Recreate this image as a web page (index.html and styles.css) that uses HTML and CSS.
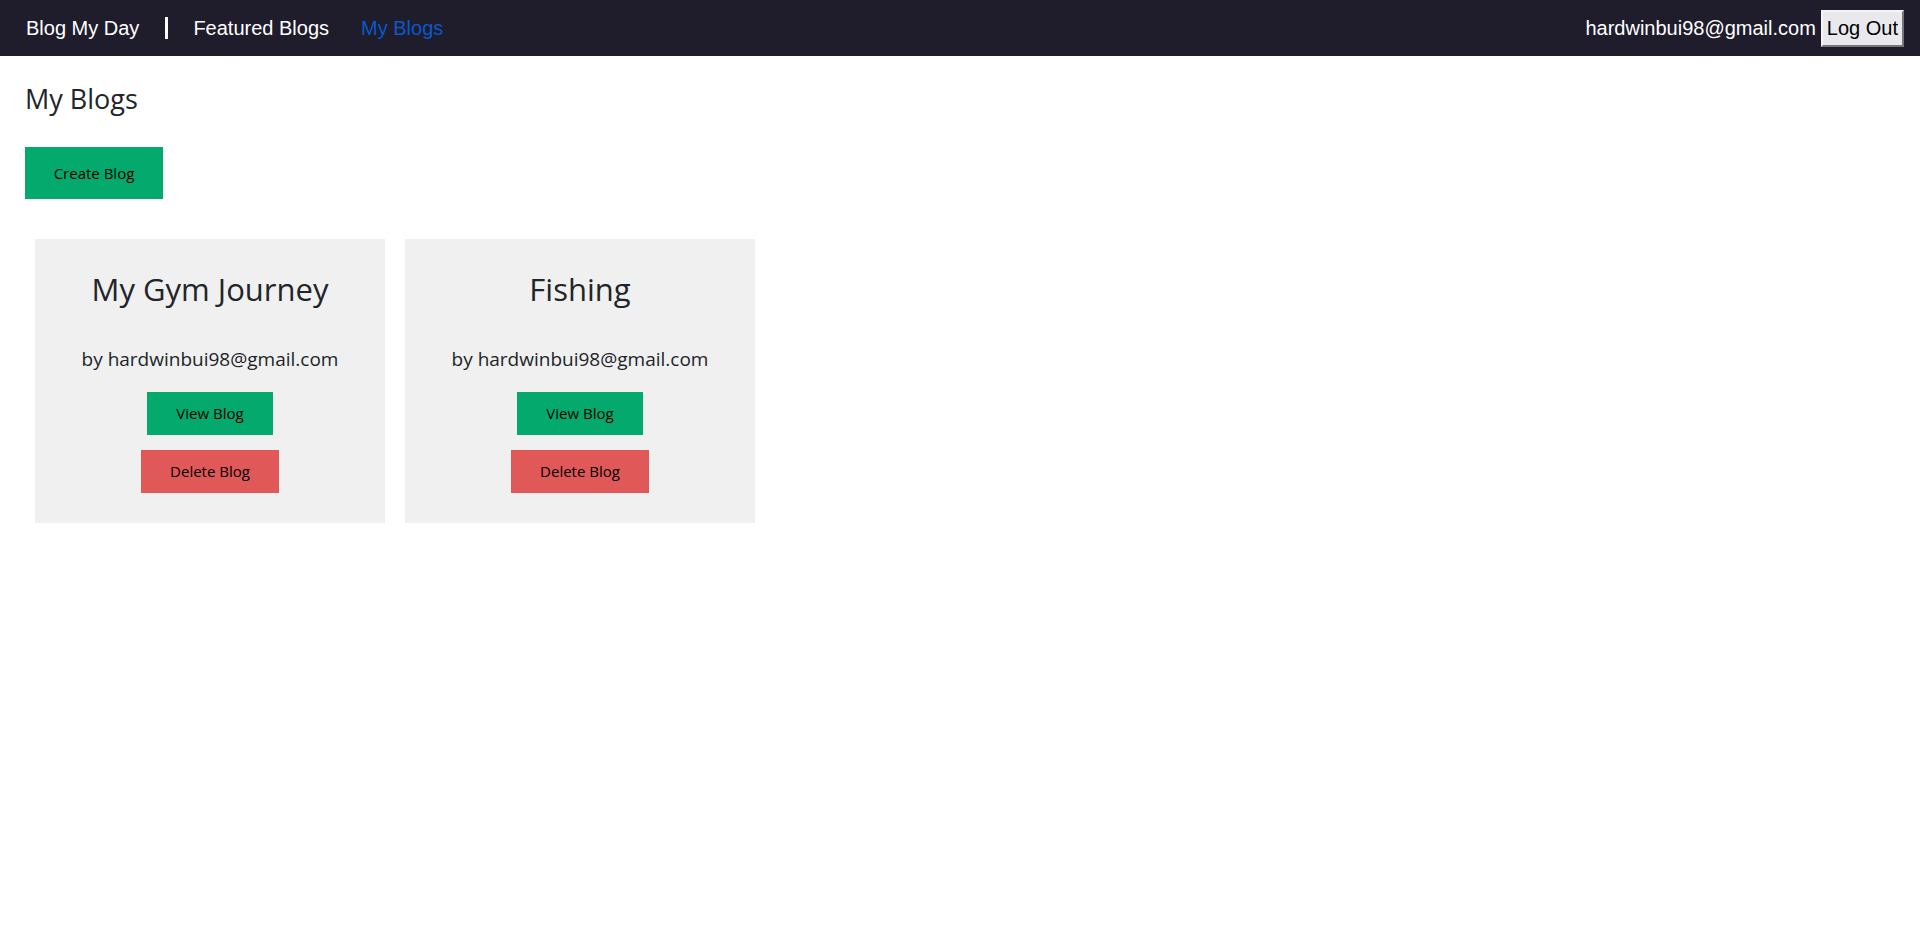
FILE: index.html
```html
<!DOCTYPE html>
<html lang="en">
<head>
<meta charset="utf-8">
<title>Blog My Day - My Blogs</title>
<link rel="stylesheet" href="styles.css">
</head>
<body>
<nav class="navbar">
  <div class="nav-left">
    <a class="brand" href="#">Blog My Day</a>
    <span class="divider"></span>
    <a class="nav-link" href="#">Featured Blogs</a>
    <a class="nav-link active" href="#">My Blogs</a>
  </div>
  <div class="nav-right">
    <span class="user-email">hardwinbui98@gmail.com</span>
    <button class="logout">Log Out</button>
  </div>
</nav>
<main class="page">
  <h3 class="page-title">My Blogs</h3>
  <button class="btn btn-green btn-create">Create Blog</button>
  <div class="cards">
    <div class="card">
      <h2 class="card-title">My Gym Journey</h2>
      <p class="card-author">by hardwinbui98@gmail.com</p>
      <button class="btn btn-green btn-view">View Blog</button>
      <button class="btn btn-red btn-delete">Delete Blog</button>
    </div>
    <div class="card">
      <h2 class="card-title">Fishing</h2>
      <p class="card-author">by hardwinbui98@gmail.com</p>
      <button class="btn btn-green btn-view">View Blog</button>
      <button class="btn btn-red btn-delete">Delete Blog</button>
    </div>
  </div>
</main>
</body>
</html>
```
FILE: styles.css
```css
* { box-sizing: border-box; }
html, body { margin: 0; padding: 0; }
body {
  font-family: "Open Sans", "Noto Sans", sans-serif;
  color: #212529;
  background: #ffffff;
  font-size: 16px;
  line-height: 1.5;
}
.navbar {
  height: 56px;
  background: #1f1c2c;
  display: flex;
  align-items: center;
  justify-content: space-between;
  padding: 0 16px 0 26px;
  font-family: "Liberation Sans", Arial, sans-serif;
  font-size: 20px;
  line-height: 23px;
}
.nav-left { display: flex; align-items: center; }
.nav-left a { color: #ffffff; text-decoration: none; }
.divider {
  display: block;
  width: 3px;
  height: 22px;
  background: #ffffff;
  margin: 0 25px 0 26px;
}
.nav-link { margin-right: 32px; }
.nav-left .nav-link.active { color: #0a58ca; }
.nav-right { display: flex; align-items: center; gap: 5px; }
.user-email { color: #ffffff; }
.logout {
  font-family: "Liberation Sans", Arial, sans-serif;
  font-size: 20px;
  height: 37px;
  padding: 0 4px;
  color: #000;
  background: #e9e9ed;
  border-width: 2px;
  border-style: solid;
  border-color: #f4f4f6 #767676 #767676 #f4f4f6;
}
.page { padding: 0 25px; }
.page-title {
  font-size: 27px;
  font-weight: 400;
  line-height: 1.2;
  margin: 27px 0 32px;
}
.btn {
  font-family: "Open Sans", "Noto Sans", sans-serif;
  font-size: 15px;
  border: none;
  color: #000;
  display: flex;
  align-items: center;
  justify-content: center;
  padding: 0;
}
.btn-green { background: #04a96d; }
.btn-red { background: #e05858; }
.btn-create { width: 138px; height: 52px; }
.cards {
  display: flex;
  gap: 20px;
  padding: 40px 10px 0;
}
.card {
  width: 350px;
  background: #f0f0f0;
  display: flex;
  flex-direction: column;
  align-items: center;
  padding: 32px 0 30px;
}
.card-title {
  font-size: 31px;
  font-weight: 400;
  line-height: 1.2;
  margin: 0 0 35px;
}
.card-author {
  font-size: 19px;
  line-height: 30px;
  margin: 0 0 18px;
}
.btn-view { width: 126px; height: 43px; margin-bottom: 15px; }
.btn-delete { width: 138px; height: 43px; }
```
